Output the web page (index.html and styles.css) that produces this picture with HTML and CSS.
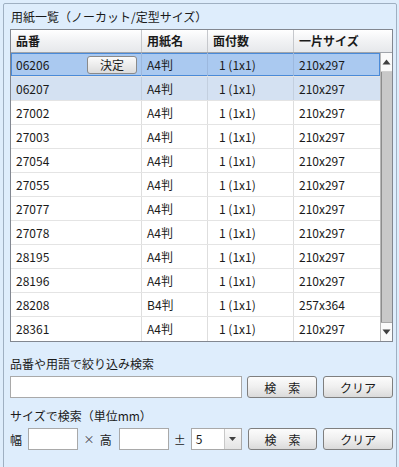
FILE: index.html
```html
<!DOCTYPE html>
<html lang="ja">
<head>
<meta charset="utf-8">
<link rel="stylesheet" href="styles.css">
</head>
<body>
<div class="group">
  <div class="title">用紙一覧（ノーカット/定型サイズ）</div>
  <div class="grid">
    <div class="head">
      <div class="hc c1">品番</div>
      <div class="hc c2">用紙名</div>
      <div class="hc c3">面付数</div>
      <div class="hc c4">一片サイズ</div>
    </div>
    <div class="body">
      <div class="rows">
        <div class="row sel"><div class="c c1">06206<button class="ok">決定</button></div><div class="c c2">A4判</div><div class="c c3">1 (1x1)</div><div class="c c4">210x297</div></div>
        <div class="row alt"><div class="c c1">06207</div><div class="c c2">A4判</div><div class="c c3">1 (1x1)</div><div class="c c4">210x297</div></div>
        <div class="row"><div class="c c1">27002</div><div class="c c2">A4判</div><div class="c c3">1 (1x1)</div><div class="c c4">210x297</div></div>
        <div class="row"><div class="c c1">27003</div><div class="c c2">A4判</div><div class="c c3">1 (1x1)</div><div class="c c4">210x297</div></div>
        <div class="row"><div class="c c1">27054</div><div class="c c2">A4判</div><div class="c c3">1 (1x1)</div><div class="c c4">210x297</div></div>
        <div class="row"><div class="c c1">27055</div><div class="c c2">A4判</div><div class="c c3">1 (1x1)</div><div class="c c4">210x297</div></div>
        <div class="row"><div class="c c1">27077</div><div class="c c2">A4判</div><div class="c c3">1 (1x1)</div><div class="c c4">210x297</div></div>
        <div class="row"><div class="c c1">27078</div><div class="c c2">A4判</div><div class="c c3">1 (1x1)</div><div class="c c4">210x297</div></div>
        <div class="row"><div class="c c1">28195</div><div class="c c2">A4判</div><div class="c c3">1 (1x1)</div><div class="c c4">210x297</div></div>
        <div class="row"><div class="c c1">28196</div><div class="c c2">A4判</div><div class="c c3">1 (1x1)</div><div class="c c4">210x297</div></div>
        <div class="row"><div class="c c1">28208</div><div class="c c2">B4判</div><div class="c c3">1 (1x1)</div><div class="c c4">257x364</div></div>
        <div class="row last"><div class="c c1">28361</div><div class="c c2">A4判</div><div class="c c3">1 (1x1)</div><div class="c c4">210x297</div></div>
      </div>
      <div class="sb">
        <div class="sbtn"><svg width="9" height="6" viewBox="0 0 9 6"><path d="M4.5 0.5 L8.5 5.5 L0.5 5.5 Z" fill="#404040"/></svg></div>
        <div class="thumb"></div>
        <div class="sbtn"><svg width="9" height="6" viewBox="0 0 9 6"><path d="M0.5 0.5 L8.5 0.5 L4.5 5.5 Z" fill="#404040"/></svg></div>
      </div>
    </div>
  </div>

  <div class="label l1">品番や用語で絞り込み検索</div>
  <div class="line">
    <input class="txt wide" type="text">
    <button class="btn">検　索</button>
    <button class="btn">クリア</button>
  </div>

  <div class="label l2">サイズで検索（単位mm）</div>
  <div class="line">
    <span class="lbl">幅</span>
    <input class="txt small" type="text">
    <span class="times">×</span>
    <span class="lbl">高</span>
    <input class="txt small" type="text">
    <span class="pm">±</span>
    <div class="select"><span class="val">5</span><span class="arrow"><svg width="7" height="4" viewBox="0 0 7 4"><path d="M0 0 L7 0 L3.5 4 Z" fill="#404040"/></svg></span></div>
    <button class="btn">検　索</button>
    <button class="btn">クリア</button>
  </div>
</div>
</body>
</html>
```

FILE: styles.css
```css
* { box-sizing: border-box; }
html, body { margin: 0; padding: 0; }
body {
  background: #deedfc;
  font-family: "Noto Sans CJK JP", "Noto Sans", sans-serif;
  font-size: 12px;
  color: #1a1a1a;
  width: 399px;
  height: 467px;
  overflow: hidden;
}
.group {
  margin: 3px 2px 0 3px;
  border: 1px solid #9fb0c2;
  border-radius: 2px;
  height: 480px;
  padding: 4px 3px 0 6px;
}
.title {
  height: 21px;
  line-height: 18px;
  padding-left: 1px;
}
.grid {
  width: 383px;
  border: 1px solid #828790;
  background: #fff;
}
.head {
  display: flex;
  height: 23px;
  background: linear-gradient(#ffffff, #f1f2f4 50%, #e6e8eb);
  border-bottom: 1px solid #a0a4aa;
}
.hc {
  font-weight: bold;
  line-height: 22px;
  padding-left: 5px;
  border-right: 1px solid #c6c8cc;
}
.c1 { width: 131px; }
.c2 { width: 66px; }
.c3 { width: 86px; }
.c4 { width: 86px; }
.head .c4 { flex: 1; border-right: none; }
.body { display: flex; }
.rows { width: 369px; }
.row {
  display: flex;
  height: 24px;
  border-bottom: 1px solid #e4e4e4;
}
.row.last { border-bottom: none; }
.c {
  line-height: 23px;
  padding-left: 5px;
  border-right: 1px solid #dedede;
  white-space: nowrap;
  position: relative;
}
.c3 { padding-left: 11px; }
.hc.c3 { padding-left: 5px; }
.row .c4 { border-right: none; }
.row.sel {
  background: #aac9f0;
  box-shadow: inset 0 0 0 1px #4a8ad8;
}
.row.sel .c { border-right-color: #9cb8de; }
.row.alt { background: #d4e1f2; }
.row.alt .c { border-right-color: #c3cfdf; }
.ok {
  position: absolute;
  left: 76px;
  top: 3px;
  width: 50px;
  height: 18px;
  font-family: inherit;
  font-size: 12px;
  line-height: 14px;
  padding: 0;
  border: 1px solid #8a8a8a;
  border-radius: 3px;
  background: linear-gradient(#fbfbfb, #ececec 50%, #dcdcdc);
  color: #1a1a1a;
}
.sb {
  width: 12px;
  display: flex;
  flex-direction: column;
  border-left: 1px solid #b8b8b8;
}
.sbtn {
  height: 19px;
  background: #fafafa;
  display: flex;
  align-items: center;
  justify-content: center;
  border-bottom: 1px solid #d0d0d0;
}
.sbtn:last-child { border-bottom: none; border-top: 1px solid #a8a8a8; }
.thumb {
  flex: 1;
  background: #c8c8c8;
  border-left: 1px solid #8c8c8c;
}
.label {
  line-height: 16px;
}
.l1 { margin-top: 13px; height: 21px; padding-top: 1px; }
.l2 { margin-top: 9px; height: 21px; padding-top: 1px; }
.line {
  display: flex;
  align-items: center;
  height: 22px;
}
.txt {
  height: 22px;
  border: 1px solid #a9a9a9;
  background: #fff;
  padding: 0;
}
.wide { width: 233px; }
.small { width: 50px; }
.btn {
  width: 70px;
  height: 22px;
  margin-left: 6px;
  font-family: inherit;
  font-size: 12px;
  padding: 0;
  border: 1px solid #7f7f7f;
  border-radius: 3px;
  background: linear-gradient(#fcfcfc, #efefef 50%, #dadada);
  color: #1a1a1a;
}
.wide + .btn { margin-left: 5px; }
.lbl { width: 18px; padding-left: 0; }
.times { width: 22px; text-align: center; color: #444; font-size: 11px; }
.pm { width: 22px; text-align: center; }
.times + .lbl { width: 19px; }
.select {
  width: 51px;
  height: 22px;
  border: 1px solid #a9a9a9;
  background: #fff;
  display: flex;
}
.select .val { flex: 1; padding-left: 4px; line-height: 20px; }
.select .arrow {
  width: 17px;
  border-left: 1px solid #c8c8c8;
  background: linear-gradient(#fafafa, #e4e4e4);
  display: flex;
  align-items: center;
  justify-content: center;
}
```
